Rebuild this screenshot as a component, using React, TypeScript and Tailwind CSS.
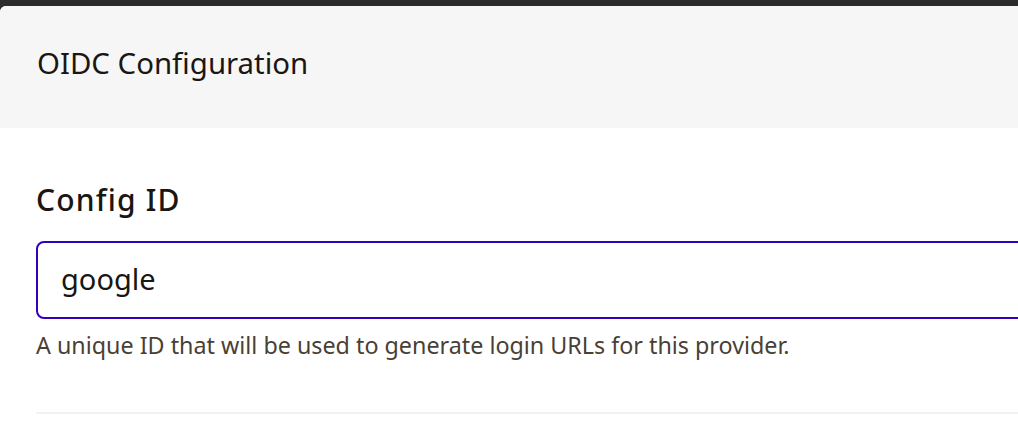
export default function App() {
  return (
    <div className="h-[424px] overflow-hidden bg-[#2b2b2b] pt-[6px] font-['Noto_Sans',sans-serif]">
      <div className="h-full overflow-hidden rounded-tl-[6px] bg-white">
        {/* Header */}
        <div className="flex h-[122px] items-center bg-[#f6f6f6] px-[37px] pb-[7px]">
          <h2 className="text-[29.4px] leading-none text-[#1a1613]">OIDC Configuration</h2>
        </div>

        {/* Form */}
        <div className="w-[1100px] pl-[36px] pt-[57px]">
          <label className="block text-[30px] font-medium leading-none tracking-[1.2px] text-[#1a1613]">
            Config ID
          </label>
          <input
            defaultValue="google"
            className="mt-[26px] block h-[78px] w-full rounded-[8px] border-2 border-[#3300c0] px-[23px] pb-[3px] text-[29px] text-[#1a1613] outline-none"
          />
          <p className="mt-[11px] text-[23.3px] leading-[30px] text-[#4a3f35]">
            A unique ID that will be used to generate login URLs for this provider.
          </p>
          <div className="mt-[52px] h-[2px] bg-[#f2f2f2]" />
        </div>
      </div>
    </div>
  );
}
